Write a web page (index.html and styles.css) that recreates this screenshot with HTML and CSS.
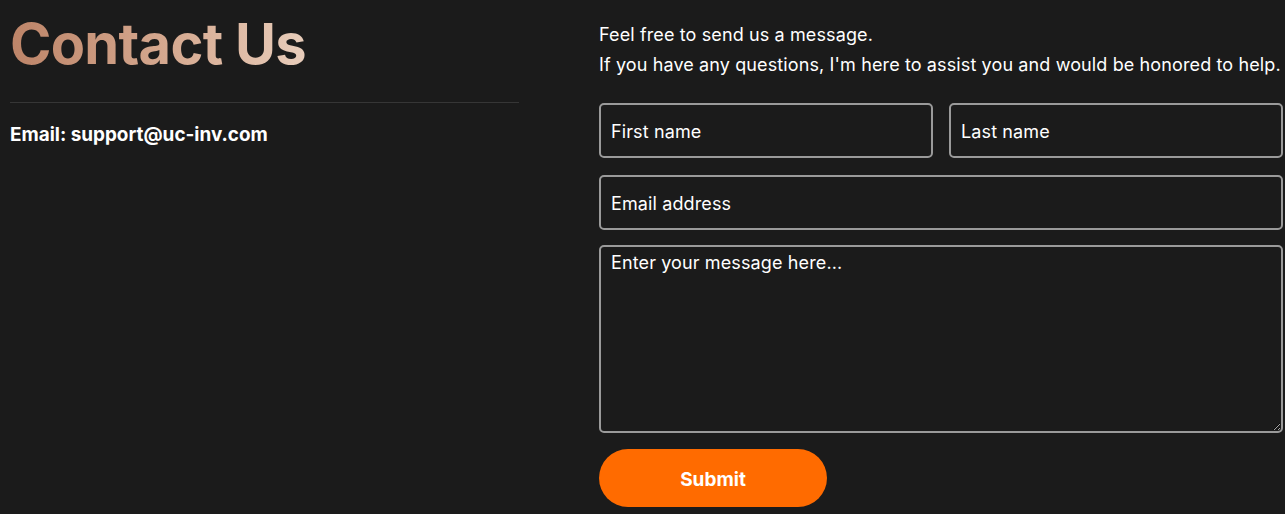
FILE: index.html
```html
<!DOCTYPE html>
<html lang="en">
<head>
<meta charset="utf-8">
<title>Contact Us</title>
<link rel="stylesheet" href="styles.css">
</head>
<body>
<main class="contact">
  <section class="info">
    <h1 class="title">Contact Us</h1>
    <hr class="divider">
    <p class="email">Email: support@uc-inv.com</p>
  </section>
  <section class="form-side">
    <p class="intro">Feel free to send us a message.<br>If you have any questions, I'm here to assist you and would be honored to help.</p>
    <form class="form">
      <div class="row">
        <input class="field" type="text" placeholder="First name">
        <input class="field" type="text" placeholder="Last name">
      </div>
      <input class="field" type="email" placeholder="Email address">
      <textarea class="field message" placeholder="Enter your message here..."></textarea>
      <button class="submit" type="button">Submit</button>
    </form>
  </section>
</main>
</body>
</html>
```
FILE: styles.css
```css
html, body {
  margin: 0;
  background: #1b1b1b;
  color: #ffffff;
  font-family: Inter, "Noto Sans", sans-serif;
}
.contact {
  display: grid;
  grid-template-columns: 509px 684px;
  column-gap: 80px;
  padding: 10px 0 0 10px;
  overflow: hidden;
}
.title {
  margin: 0;
  font-size: 56px;
  font-weight: 700;
  line-height: 68px;
  letter-spacing: -0.7px;
  background: linear-gradient(90deg, #bd8468 0%, #d6aa91 55%, #e8cdbb 100%);
  -webkit-background-clip: text;
  background-clip: text;
  color: transparent;
  display: inline-block;
}
.divider {
  border: 0;
  border-top: 1px solid #363636;
  margin: 24px 0 0;
}
.email {
  margin: 20px 0 0;
  font-size: 18.9px;
  font-weight: 700;
}
.form-side {
  padding-top: 10px;
}
.intro {
  margin: 0;
  font-size: 18px;
  line-height: 30px;
  letter-spacing: 0.12px;
  white-space: nowrap;
}
.form {
  display: flex;
  flex-direction: column;
  gap: 15px;
  margin-top: 23px;
}
.row {
  display: grid;
  grid-template-columns: 1fr 1fr;
  gap: 16px;
  margin-bottom: 2px;
}
.field {
  box-sizing: border-box;
  height: 55px;
  width: 100%;
  background: #1b1b1b;
  border: 2px solid #9a9a9a;
  border-radius: 5px;
  color: #fff;
  font-family: Inter, "Noto Sans", sans-serif;
  font-size: 18px;
  letter-spacing: 0.12px;
  padding: 2px 10px 0;
}
.field::placeholder {
  color: #ffffff;
  opacity: 1;
}
.message {
  height: 188px;
  padding: 5px 10px;
  resize: vertical;
}
.submit {
  margin-top: 1px;
  width: 228px;
  height: 58px;
  padding-top: 3px;
  border: 0;
  border-radius: 29px;
  background: #ff6b00;
  color: #fff;
  font-family: Inter, "Noto Sans", sans-serif;
  font-size: 19px;
  font-weight: 700;
}
```
